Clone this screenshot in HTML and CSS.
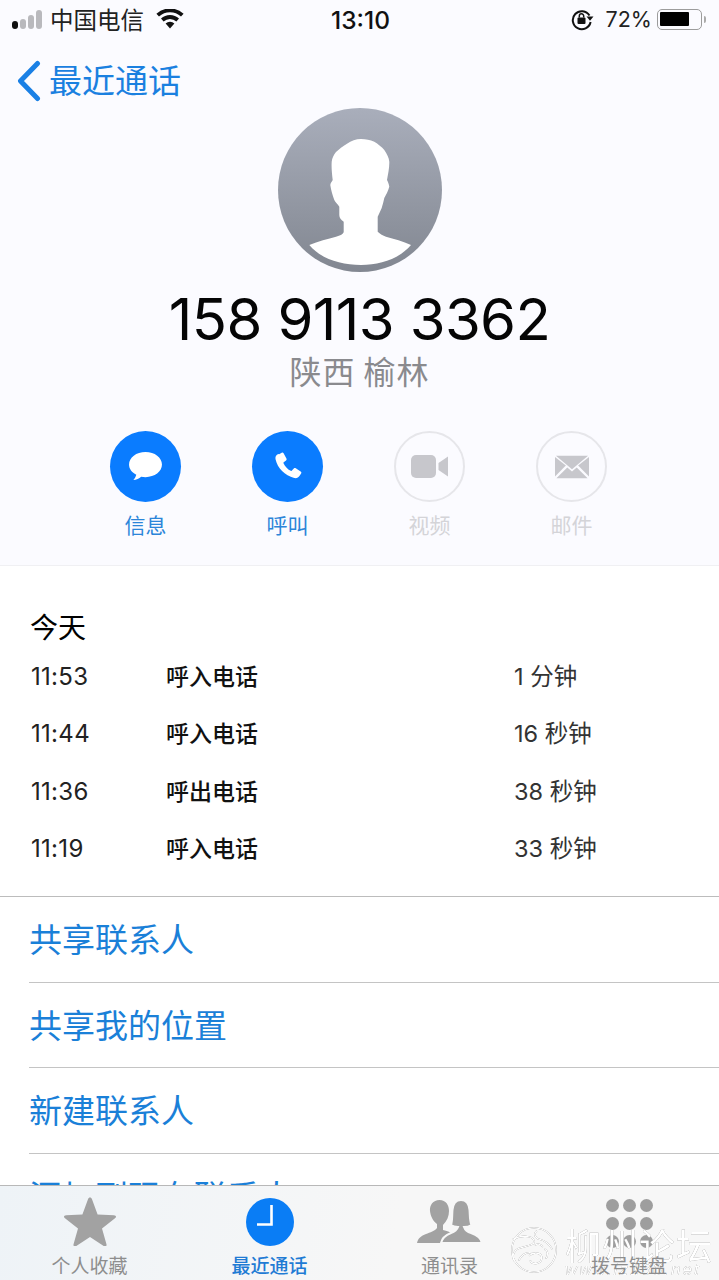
FILE: index.html
```html
<!DOCTYPE html>
<html lang="zh">
<head>
<meta charset="utf-8">
<title>最近通话</title>
<link rel="stylesheet" href="styles.css">
</head>
<body>
<div class="screen">
  <header class="top">
    <div class="status">
      <div class="status-side">
        <span class="signal"><i class="on"></i><i></i><i></i><i></i></span>
        <span class="carrier">中国电信</span>
        <svg class="wifi" viewBox="0 0 28 20"><path d="M14 19.500 9.600 14.600a6.400 6.400 0 0 1 8.800 0Z"/><path d="M7.600 12.400 5 9.600a13.200 13.200 0 0 1 18 0l-2.600 2.800a9.400 9.400 0 0 0-12.800 0Z"/><path d="M3 7.600.4 4.800a20 20 0 0 1 27.200 0L25 7.600a16.200 16.200 0 0 0-22 0Z"/></svg>
      </div>
      <div class="clock">13:10</div>
      <div class="status-side status-right">
        <svg class="lock" viewBox="0 0 24 24"><path d="M19.500 8.500A9 9 0 1 0 20.600 15" fill="none" stroke="#111" stroke-width="2"/><path d="M16.500 9.500h7l-3.500 4.200Z" fill="#111"/><rect x="7.500" y="10.500" width="8" height="6.500" rx="1" fill="#111"/><path d="M9.300 10.500V9a2.200 2.200 0 0 1 4.400 0v1.500" fill="none" stroke="#111" stroke-width="1.500"/></svg>
        <span class="pct">72%</span>
        <span class="battery"><span class="level"></span></span>
        <span class="nub"></span>
      </div>
    </div>
    <div class="nav">
      <svg class="chev" viewBox="0 0 26 42"><path d="M21.500 3.500 4.500 21l17 17.500" fill="none" stroke="#1a80e5" stroke-width="5" stroke-linecap="round" stroke-linejoin="round"/></svg>
      <span class="back">最近通话</span>
    </div>
    <div class="profile">
      <svg class="avatar" viewBox="0 0 164 164">
        <defs><linearGradient id="g" x1="0" y1="0" x2="0" y2="1"><stop offset="0" stop-color="#a9aebb"/><stop offset="1" stop-color="#828791"/></linearGradient></defs>
        <circle cx="82" cy="82" r="82" fill="url(#g)"/>
        <path d="M31.300 137C40 133 50 131 58 128.700C62 127.500 65.700 126 65.700 123.700V113.700C63 111.500 61.300 110 61.300 107V98.700C59.500 96 57.500 94.500 56.300 92C54.500 87 53 82 52.300 77C52.500 75 54 73.500 54.700 72C54 66 53.300 60 53.700 53.700C54 50 56 46.500 58 44C64 39 73 31 83 31C88 31 92 32 96.300 33.700C100 36 104 39 106.300 42C109 46 111 50 111.300 53.700C111.500 60 110 66 109 72C110 74 111 76.500 111.300 78.700C110 83 108 87 106.300 90C105.500 94 104.500 97 103.700 100L99.700 108.700V123.700C102 126 105 127.500 108 128.700C116 131 125 133 133 137C121 151 102 157 83 157C63 157 43 151 31.300 137Z" fill="#fff"/>
      </svg>
      <div class="number">158 9113 3362</div>
      <div class="place">陕西 榆林</div>
    </div>
    <div class="actions">
      <div class="action">
        <span class="disc">
          <svg viewBox="0 0 36 32" width="35" height="31"><path d="M18 1C8.500 1 1 6.700 1 14c0 4.500 3 8.300 7.500 10.500-.5 1.800-1.500 3.800-3 5.500 3-.2 6-1.600 8-3.400 1.400.3 3 .4 4.500.4 9.500 0 17-5.700 17-13S27.500 1 18 1Z" fill="#fff"/></svg>
        </span>
        <span class="label">信息</span>
      </div>
      <div class="action">
        <span class="disc">
          <svg viewBox="0 0 32 32" width="30" height="30"><path d="M6.500 2.300 9.300.8c.8-.4 1.500-.2 2 .6l3 5.500c.4.800.3 1.500-.4 2.100l-2.500 1.900c-.3.300-.4.600-.2 1 1.500 3.400 4.200 6.300 7.700 8.200.4.200.7.100 1-.2l2.300-2.300c.6-.6 1.300-.7 2.100-.2l5.200 3.400c.8.500 1 1.200.5 2l-1.800 2.900c-1 1.600-3.100 2.600-5.500 2-10.200-2.500-17.800-10.300-20-19.900-.5-2.200.3-4.200 2.800-5.600Z" fill="#fff"/></svg>
        </span>
        <span class="label">呼叫</span>
      </div>
      <div class="action off">
        <span class="disc">
          <svg viewBox="0 0 37 23" width="37" height="23"><rect y="0" width="25" height="23" rx="5" fill="#c7c7cc"/><path d="M27.500 8 37 1.500v20L27.500 15Z" fill="#c7c7cc"/></svg>
        </span>
        <span class="label">视频</span>
      </div>
      <div class="action off">
        <span class="disc">
          <svg viewBox="0 0 36 24" width="34" height="24" fill="#c7c7cc"><path d="M1 0h34L18 14.500Z"/><path d="M0 1.500V22l11.500-11.500Z"/><path d="M36 1.500V22L24.500 10.500Z"/><path d="M1.500 24 13 12.500l5 4.200 5-4.200L34.500 24Z"/></svg>
        </span>
        <span class="label">邮件</span>
      </div>
    </div>
  </header>

  <main class="content">
    <section class="calls">
      <h2 class="day">今天</h2>
      <div class="call"><span class="t">11:53</span><span class="k">呼入电话</span><span class="d">1 分钟</span></div>
      <div class="call"><span class="t">11:44</span><span class="k">呼入电话</span><span class="d">16 秒钟</span></div>
      <div class="call"><span class="t">11:36</span><span class="k">呼出电话</span><span class="d">38 秒钟</span></div>
      <div class="call"><span class="t">11:19</span><span class="k">呼入电话</span><span class="d">33 秒钟</span></div>
    </section>
    <ul class="links">
      <li>共享联系人</li>
      <li>共享我的位置</li>
      <li>新建联系人</li>
      <li>添加到现有联系人</li>
    </ul>
  </main>

  <nav class="tabs">
    <div class="tab">
      <svg class="tab-icon" viewBox="0 0 54 50" width="54" height="50"><path d="M27 1.500c1 0 1.600.6 2 1.700l5.600 15.300 16.300.7c2.300.1 2.800 1.800 1.100 3.100L39 32.500l4.400 15.600c.6 2.100-.9 3-2.700 1.800L27 41l-13.700 8.900c-1.800 1.200-3.300.3-2.700-1.800L15 32.500 2 22.300c-1.700-1.300-1.200-3 1.100-3.100l16.300-.7L25 3.200c.4-1.100 1-1.700 2-1.700Z" fill="#a2a2a2"/></svg>
      <span class="tab-label">个人收藏</span>
    </div>
    <div class="tab active">
      <svg class="tab-icon" viewBox="0 0 50 50" width="50" height="50"><circle cx="25" cy="26" r="24" fill="#0a7df5"/><path d="M26.500 9V28.500H12" fill="none" stroke="#fff" stroke-width="2.600"/></svg>
      <span class="tab-label">最近通话</span>
    </div>
    <div class="tab">
      <svg class="tab-icon people" viewBox="0 0 66 44" width="66" height="44"><path class="man" d="M0 43C1 38 4 36 9 34C13 32.500 18 31 20 28V24C16 21 13.500 16 13 11C12.500 5 16 0 22.500 0C29 0 32 5 32 11C32 16 30 21 26 25L26 30C30 31 33 32 34 33L24 43Z"/><path class="woman" d="M24 43C25 38 29 35 34 33C37 32 40 30 41 27C38 27 36 26.500 34 25C35.500 21 35 15 35.500 10C36 4 39 0 44 0C49 0 52 4 52.500 10C53 15 52.500 21 54.500 25C52 26.500 50 27 47 27C48 30 50 32 54 33C60 35 64 38 65 43Z"/></svg>
      <span class="tab-label">通讯录</span>
    </div>
    <div class="tab">
      <span class="pad"><i></i><i></i><i></i><i></i><i></i><i></i><i></i><i></i><i></i></span>
      <span class="tab-label">拨号键盘</span>
    </div>
    <div class="mark">
      <svg class="mark-logo" viewBox="0 0 50 50" width="48" height="48" fill="none" stroke="#fff" stroke-width="1.400"><circle cx="25" cy="25" r="23"/><path d="M3 14c9-5 20-4 22 1s-9 6-15 8-9 9-5 14M20 31c5-5 14-3 13 3s-10 7-12 2M9 36c3-6 8-9 14-8M28 5c-4 3-2 8 3 9s9 4 13 10M36 24c4 2 4 7 1 10M26 20c3-2 7-1 8 2"/></svg>
      <div class="mark-text">
        <span class="mark-cn">柳州论坛</span>
        <span class="mark-en">www.lz160.net</span>
      </div>
    </div>
  </nav>
</div>
</body>
</html>
```

FILE: styles.css
```css
* { box-sizing: border-box; }
html, body { margin: 0; padding: 0; }
body { font-family: "Noto Sans CJK SC", "Noto Sans", sans-serif; background: #fff; color: #000; }
.screen { width: 719px; height: 1280px; position: relative; overflow: hidden; display: flex; flex-direction: column; }

.top { height: 566px; flex: none; background: #fbfbff; border-bottom: 1px solid #f0f0f3; }
.status { height: 40px; display: flex; align-items: center; justify-content: space-between; padding: 0 12px 2px 12px; position: relative; font-family: "Inter", "Noto Sans CJK SC", sans-serif; }
.status-side { display: flex; align-items: center; }
.signal { display: flex; align-items: flex-end; gap: 2px; width: 32px; }
.signal i { width: 6px; background: #b9b9bd; border-radius: 3px; }
.signal i:nth-child(1) { height: 8px; background: #111; }
.signal i:nth-child(2) { height: 10px; }
.signal i:nth-child(3) { height: 14px; }
.signal i:nth-child(4) { height: 19px; }
.carrier { font-family: "Noto Sans CJK SC", sans-serif; font-size: 23.500px; line-height: 30px; margin-left: 6px; color: #222; }
.wifi { width: 28px; height: 20px; margin-left: 12px; fill: #111; }
.clock { position: absolute; left: 2px; right: 0; top: 6px; text-align: center; font-size: 24.500px; line-height: 28px; font-weight: 500; color: #111; }
.status-right { color: #222; padding-right: 1px; }
.lock { width: 24px; height: 24px; margin-right: 12px; }
.pct { font-size: 21.500px; line-height: 28px; font-weight: 400; margin-right: 5px; }
.battery { width: 45px; height: 21px; border: 1.500px solid #9c9c9c; border-radius: 5px; padding: 2px; display: block; }
.level { display: block; width: 29px; height: 14px; background: #000; border-radius: 1px; }
.nub { width: 2px; height: 7px; background: #aaa; border-radius: 0 2px 2px 0; margin-left: 2px; }

.nav { height: 46px; margin-top: 18px; display: flex; align-items: center; padding-left: 16px; }
.chev { width: 26px; height: 42px; }
.back { font-size: 33px; line-height: 46px; color: #1a80e0; margin-left: 7px; padding-bottom: 4px; }

.profile { display: flex; flex-direction: column; align-items: center; padding-top: 4px; }
.avatar { width: 164px; height: 164px; display: block; }
.number { font-family: "Inter", sans-serif; font-size: 58px; line-height: 62px; margin-top: 16px; letter-spacing: -.6px; color: #050505; }
.place { font-size: 32px; line-height: 44px; color: #8a8a8e; letter-spacing: 1px; margin-top: -2px; }

.actions { display: flex; gap: 71px; justify-content: flex-start; padding-left: 110px; margin-top: 39px; }
.action { width: 71px; display: flex; flex-direction: column; align-items: center; }
.disc { width: 71px; height: 71px; border-radius: 50%; background: #0a7cff; display: flex; align-items: center; justify-content: center; }
.label { font-size: 21px; line-height: 28px; color: #2b85d9; margin-top: 8px; }
.off .disc { background: transparent; border: 2px solid #e6e6ea; }
.off .label { color: #d4d4d8; }

.content { flex: 1; min-height: 0; overflow: hidden; background: #fff; }
.calls { padding: 40px 0 0 30px; border-bottom: 1px solid #bcbcbc; height: 331px; }
.day { margin: 0 0 2px; font-size: 28px; line-height: 40px; font-weight: 400; color: #000; }
.call { display: flex; height: 57.500px; align-items: center; font-size: 23px; line-height: 30px; color: #222; }
.t { width: 136px; font-family: "Inter", sans-serif; font-size: 24px; font-weight: 400; letter-spacing: .3px; padding-left: 1px; }
.k { width: 348px; font-size: 23px; font-weight: 500; color: #111; padding-bottom: 4px; }
.d { font-family: "Inter", "Noto Sans CJK SC", sans-serif; font-size: 23.500px; color: #333; }

.links { list-style: none; margin: 0; padding: 0 0 0 29px; }
.links li { height: 85.500px; padding-bottom: 2px; display: flex; align-items: center; font-size: 33px; color: #1a80d8; border-bottom: 1px solid #c4c4c4; white-space: nowrap; }

.tabs { height: 95px; flex: none; background: linear-gradient(100deg, #eef3f7, #f7f7f7 55%); border-top: 1px solid #b8b8b8; display: grid; grid-template-columns: 179px 181px 179px 180px; position: relative; }
.tab { display: flex; flex-direction: column; align-items: center; padding-top: 10px; }
.tab-icon, .pad { height: 50px; display: block; }
.people { height: 44px; margin-top: 4px; margin-bottom: 2px; }
.man { fill: #a2a2a2; }
.woman { fill: #a2a2a2; stroke: #f7f7f7; stroke-width: 2; }
.tab-label { font-size: 19px; line-height: 24px; margin-top: 7px; color: #8e8e8e; white-space: nowrap; position: relative; z-index: 1; }
.active .tab-label { color: #1f7bd4; font-weight: 500; }
.pad { display: grid; grid-template-columns: repeat(3, 13px); gap: 4px; width: 47px; margin-top: 3px; }
.pad i { width: 13px; height: 13px; border-radius: 50%; background: #9e9e9e; }
.tab:nth-child(4) .tab-label { margin-top: 4px; }

.mark { position: absolute; left: 510px; top: 40px; display: flex; align-items: flex-start; gap: 7px; }
.mark-logo { filter: drop-shadow(0 0 .7px #777); }
.mark-text { display: flex; flex-direction: column; filter: drop-shadow(0 0 .7px #777); }
.mark-cn { font-size: 36px; line-height: 36px; color: #fff; font-weight: 400; letter-spacing: 1px; white-space: nowrap; }
.mark-en { font-family: "Liberation Sans", sans-serif; font-size: 17px; line-height: 16px; color: #fff; letter-spacing: 2px; font-style: italic; white-space: nowrap; }
```
